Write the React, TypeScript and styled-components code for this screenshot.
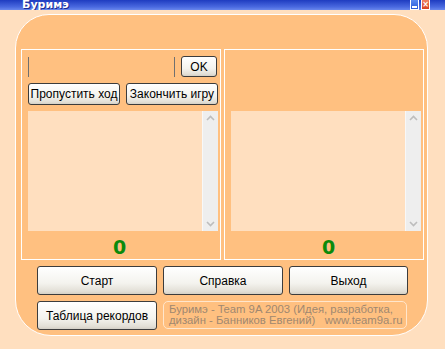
import React from "react";
import styled, { createGlobalStyle } from "styled-components";

const Global = createGlobalStyle`
  html, body { margin: 0; padding: 0; background: #FFDFBF; }
  body { width: 445px; height: 349px; overflow: hidden; font-family: "Liberation Sans", Arial, sans-serif; }
`;

const Window = styled.div`
  width: 445px;
  height: 349px;
  background: #FFDFBF;
  display: flex;
  flex-direction: column;
`;

const TitleBar = styled.div`
  height: 10px;
  flex: none;
  background: linear-gradient(#1E3CC0, #4A6AE0 70%, #6A88EC);
  display: flex;
  align-items: flex-end;
  overflow: hidden;
  position: relative;
`;

const Title = styled.span`
  font-family: "DejaVu Sans", Verdana, sans-serif;
  font-weight: bold;
  font-size: 11px;
  line-height: 11px;
  color: #fff;
  margin-left: 22px;
  margin-bottom: 0px;
  text-shadow: 1px 1px 0 #1A2A90;
`;

const TitleButtons = styled.div`
  margin-left: auto;
  margin-right: 15px;
  display: flex;
  gap: 2px;
  align-self: stretch;
`;

const TitleBtn = styled.div<{ $kind: "min" | "close" }>`
  width: 9px;
  height: 10px;
  box-sizing: border-box;
  border: 1px solid #fff;
  border-top: none;
  background: ${(p) =>
    p.$kind === "min"
      ? "linear-gradient(#5A8AF0, #2A5AD8)"
      : "linear-gradient(#F08060, #D84020)"};
  display: flex;
  align-items: center;
  justify-content: center;
  color: #fff;
  font-family: "DejaVu Sans", sans-serif;
  font-size: 8px;
  line-height: 8px;
  font-weight: bold;
`;

const MinBar = styled.div`
  width: 5px;
  height: 2px;
  background: #fff;
  margin-top: 4px;
`;

const Content = styled.div`
  padding: 4px 0 0 15px;
`;

const Panel = styled.div`
  width: 413px;
  height: 322px;
  box-sizing: border-box;
  border: 1px solid #fff;
  border-radius: 34px 34px 36px 36px;
  background: #FFC080;
  padding: 34px 0 0 5px;
  display: flex;
  flex-direction: column;
`;

const Columns = styled.div`
  display: flex;
  gap: 3px;
`;

const Column = styled.div`
  width: 200px;
  height: 211px;
  box-sizing: border-box;
  border: 1px solid #fff;
  padding: 6px 3px 0 6px;
  display: flex;
  flex-direction: column;
`;

const InputRow = styled.div`
  display: flex;
  gap: 6px;
  height: 21px;
  margin-bottom: 6px;
`;

const Edit = styled.div`
  width: 148px;
  height: 20px;
  margin-top: 1px;
  box-sizing: border-box;
  border-left: 1px solid #707070;
  border-right: 1px solid #707070;
`;

const Button = styled.button<{ $w: number; $h: number }>`
  width: ${(p) => p.$w}px;
  height: ${(p) => p.$h}px;
  box-sizing: border-box;
  border: 1px solid #3C3C3C;
  border-radius: 3px;
  background: linear-gradient(#FFFFFF, #F4F3EE 60%, #E2DFD6 90%, #D4D0C6);
  font-family: "Liberation Sans", Arial, sans-serif;
  font-size: 12px;
  color: #000;
  padding: 0;
  display: flex;
  align-items: center;
  justify-content: center;
  flex: none;
`;

const ButtonRow = styled.div`
  display: flex;
  gap: 6px;
  margin-bottom: 6px;
`;

const ListBox = styled.div`
  width: 190px;
  height: 120px;
  background: #FFDFBF;
  display: flex;
  justify-content: flex-end;
`;

const ScrollBar = styled.div`
  width: 16px;
  height: 100%;
  background: #EEEEEE;
  border-left: 1px solid #F8F8F8;
  box-sizing: border-box;
  display: flex;
  flex-direction: column;
  align-items: center;
  justify-content: space-between;
  padding: 4px 0 4px;
`;

const Chevron = ({ up }: { up?: boolean }) => (
  <svg width="9" height="6" viewBox="0 0 9 6">
    <path
      d={up ? "M1 5 L4.5 1.5 L8 5" : "M1 1 L4.5 4.5 L8 1"}
      fill="none"
      stroke="#BDBDBD"
      strokeWidth="1.6"
    />
  </svg>
);

const Score = styled.div<{ $offset: number }>`
  flex: 1;
  display: flex;
  align-items: center;
  justify-content: center;
  padding-left: ${(p) => (p.$offset > 0 ? p.$offset : 0)}px;
  padding-right: ${(p) => (p.$offset < 0 ? -p.$offset : 0)}px;
  font-family: "DejaVu Sans", Verdana, sans-serif;
  font-weight: bold;
  font-size: 19px;
  color: #0B8A0B;
  padding-top: 3px;
`;

const Spacer = styled.div`
  height: 55px;
  flex: none;
`;

const Bottom = styled.div`
  display: flex;
  flex-direction: column;
  gap: 6px;
  padding: 6px 0 0 16px;
`;

const BottomRow = styled.div`
  display: flex;
  gap: 6px;
`;

const Info = styled.div`
  width: 244px;
  height: 28px;
  box-sizing: border-box;
  border: 1px solid #FFE6CC;
  border-radius: 5px;
  padding: 2px 0 0 5px;
  font-family: "Liberation Sans", Arial, sans-serif;
  font-size: 11.3px;
  line-height: 11px;
  color: #A08870;
  white-space: pre;
`;

function List() {
  return (
    <ListBox>
      <ScrollBar>
        <Chevron up />
        <Chevron />
      </ScrollBar>
    </ListBox>
  );
}

export default function App() {
  return (
    <>
      <Global />
      <Window>
        <TitleBar>
          <Title>Буримэ</Title>
          <TitleButtons>
            <TitleBtn $kind="min">
              <MinBar />
            </TitleBtn>
            <TitleBtn $kind="close">×</TitleBtn>
          </TitleButtons>
        </TitleBar>
        <Content>
          <Panel>
            <Columns>
              <Column>
                <InputRow>
                  <Edit />
                  <Button $w={36} $h={21}>OK</Button>
                </InputRow>
                <ButtonRow>
                  <Button $w={92} $h={22}>Пропустить ход</Button>
                  <Button $w={92} $h={22}>Закончить игру</Button>
                </ButtonRow>
                <List />
                <Score $offset={-6}>0</Score>
              </Column>
              <Column>
                <Spacer />
                <List />
                <Score $offset={6}>0</Score>
              </Column>
            </Columns>
            <Bottom>
              <BottomRow>
                <Button $w={120} $h={29}>Старт</Button>
                <Button $w={120} $h={29}>Справка</Button>
                <Button $w={119} $h={29}>Выход</Button>
              </BottomRow>
              <BottomRow>
                <Button $w={120} $h={29}>Таблица рекордов</Button>
                <Info>{"Буримэ - Team 9A 2003 (Идея, разработка,\nдизайн - Банников Евгений)   www.team9a.ru"}</Info>
              </BottomRow>
            </Bottom>
          </Panel>
        </Content>
      </Window>
    </>
  );
}
